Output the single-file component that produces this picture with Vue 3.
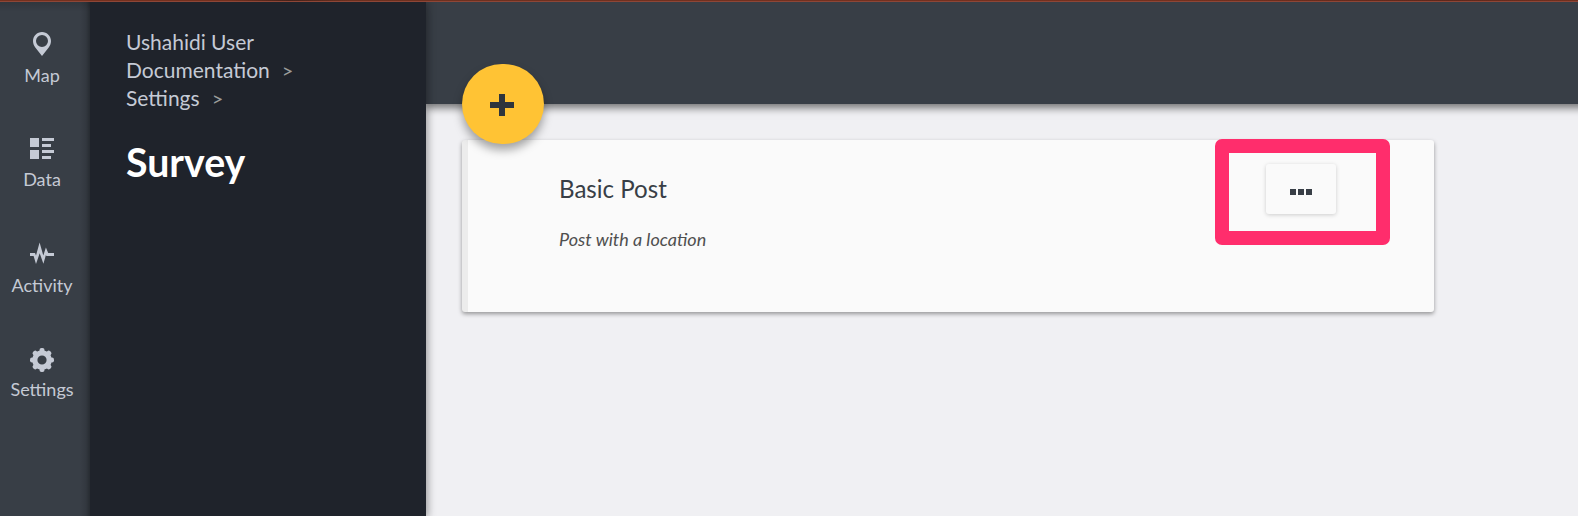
<script setup>
const nav = [
  { id: 'map', label: 'Map' },
  { id: 'data', label: 'Data' },
  { id: 'activity', label: 'Activity' },
  { id: 'settings', label: 'Settings' },
]
const teeth = [0, 45, 90, 135, 180, 225, 270, 315]
</script>

<template>
  <div class="app">
    <div class="strip"></div>
    <div class="shell">
      <nav class="rail">
        <a v-for="item in nav" :key="item.id" class="rail-item" :class="item.id">
          <svg v-if="item.id === 'map'" width="24" height="24" viewBox="0 0 24 24">
            <path fill-rule="evenodd" d="M12 0C7 0 3 4 3 9c0 2.500.9 4.600 2.300 6.500L12 24l6.700-8.500C20.100 13.600 21 11.500 21 9c0-5-4-9-9-9zm0 15a6 6 0 1 1 0-12 6 6 0 0 1 0 12z" />
          </svg>
          <svg v-else-if="item.id === 'data'" width="24" height="24" viewBox="0 0 24 24">
            <path d="M0 2h9v9H0zM0 14h9v9H0zM12 2h12v3H12zM12 8h9v3h-9zM12 14h12v3H12zM12 20h9v3h-9z" />
          </svg>
          <svg v-else-if="item.id === 'activity'" width="24" height="24" viewBox="0 0 24 24">
            <path d="M0 10.900H5L6 13.500 9.600.5l3.700 13 2.600-7.900 2.300 5.300H24v3h-7.600l-.5-1-2.500 8.900-3.700-10.500L6 22 3.600 13.900H0z" />
          </svg>
          <svg v-else width="24" height="24" viewBox="-12 -12 24 24">
            <rect v-for="a in teeth" :key="a" x="-2.500" y="-12" width="5" height="6" rx="2" :transform="`rotate(${a})`" />
            <circle r="7.200" fill="none" class="ring" />
          </svg>
          <span>{{ item.label }}</span>
        </a>
      </nav>
      <aside class="panel">
        <div class="crumbs">
          <div>Ushahidi User</div>
          <div>Documentation<i class="sep">&gt;</i></div>
          <div>Settings<i class="sep">&gt;</i></div>
        </div>
        <h1>Survey</h1>
      </aside>
      <main class="main">
        <header class="bar"></header>
        <button class="fab" aria-label="Add">
          <svg width="24" height="22" viewBox="0 0 24 22"><path d="M9 0h6v8h9v6h-9v8H9v-8H0V8h9z" /></svg>
        </button>
        <section class="card">
          <div class="info">
            <h2>Basic Post</h2>
            <p>Post with a location</p>
          </div>
          <div class="highlight">
            <button class="more" aria-label="More">
              <b></b><b></b><b></b>
            </button>
          </div>
        </section>
      </main>
    </div>
  </div>
</template>

<style>
body { overflow: hidden; }
</style>

<style scoped>
* { box-sizing: border-box; }
.app {
  width: 1578px;
  height: 516px;
  display: flex;
  flex-direction: column;
  overflow: hidden;
  font-family: Lato, sans-serif;
}
.strip {
  height: 2px;
  background: linear-gradient(90deg, #74301e 0, #74301e 230px, #45221a 290px, #6c301f 350px, #75301f 60%, #74301e 75%, #5f271b 92%, #74301e);
  border-bottom: 1px solid #8d4637;
}
.shell { flex: 1; display: flex; }
.rail {
  width: 90px;
  padding: 30px 6px 0 0;
  background:
    linear-gradient(270deg, rgba(0, 0, 0, .3), rgba(0, 0, 0, .1) 4px, transparent 10px),
    linear-gradient(180deg, rgba(0, 0, 0, .14), transparent 10px),
    #383e46;
}
.rail-item {
  height: 105px;
  display: flex;
  flex-direction: column;
  align-items: center;
  color: #c5cad5;
  font-size: 18px;
  line-height: 22px;
}
.rail-item span { margin-top: 8px; }
.rail-item.data { margin-top: -1px; }
.rail-item.activity { margin-top: 1px; }
.rail-item.settings { padding-top: 1px; }
.rail-item.settings span { margin-top: 6px; }
.rail-item svg { flex: none; fill: #c5cad5; }
.ring { stroke: #c5cad5; stroke-width: 5.200; }
.panel {
  width: 336px;
  padding: 26px 36px;
  background: #1f232b;
  position: relative;
  z-index: 2;
  box-shadow: 1px 0 8px 1px rgba(0, 0, 0, .3), 0 12px 8px rgba(0, 0, 0, .1);
  clip-path: inset(0 -16px 0 0);
}
.crumbs { color: #c5cad5; font-size: 21px; line-height: 28px; }
.sep { margin-left: 12px; font-style: normal; font-size: 20px; line-height: 0; color: #9c9c9c; }
h1 { margin: 26px 0 0; font-size: 39.300px; line-height: 48px; font-weight: 700; color: #fff; }
.main { flex: 1; background: #f0f0f3; overflow: hidden; }
.bar { height: 102px; margin-right: -20px; background: #383e46; box-shadow: 0 3px 8px 1px rgba(0, 0, 0, .52); }
.fab {
  position: relative;
  z-index: 1;
  display: flex;
  align-items: center;
  justify-content: center;
  width: 82px;
  height: 80px;
  margin: -40px 0 0 36px;
  padding: 2px 2px 0 0;
  border: 0;
  border-radius: 40px;
  background: #ffc334;
  box-shadow: 0 6px 10px rgba(0, 0, 0, .35);
}
.fab svg { fill: #2e353c; }
.card {
  display: flex;
  justify-content: space-between;
  width: 972px;
  height: 172px;
  margin: -4px 0 0 36px;
  padding-right: 44px;
  border-left: 6px solid #ececec;
  border-radius: 3px;
  background: #fafafa;
  box-shadow: 0 2px 4px rgba(0, 0, 0, .38);
}
.info { padding: 34px 0 0 91px; }
h2 { margin: 0; font-size: 24.100px; line-height: 30px; font-weight: 400; color: #383e46; }
p { margin: 23px 0 0; font-size: 18px; line-height: 24px; font-style: italic; color: #4f4f4f; }
.highlight {
  width: 175px;
  height: 106px;
  margin-top: -1px;
  padding: 11px 0 0 37px;
  border: 14px solid #ff2d6c;
  border-radius: 7px;
}
.more {
  display: flex;
  gap: 2px;
  width: 70px;
  height: 50px;
  padding: 25px 0 0 24px;
  border: 0;
  border-radius: 3px;
  background: #fafafa;
  box-shadow: 0 1px 4px rgba(0, 0, 0, .18);
}
.more b { width: 6px; height: 6px; background: #383e46; }
</style>
